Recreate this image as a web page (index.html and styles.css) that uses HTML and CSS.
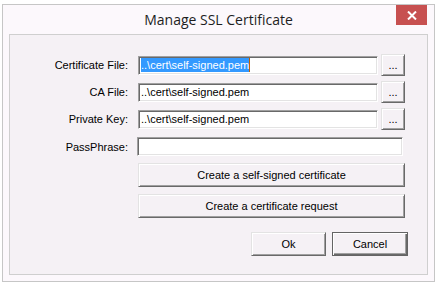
FILE: index.html
```html
<!DOCTYPE html>
<html lang="en">
<head>
  <meta charset="UTF-8">
  <title>Manage SSL Certificate</title>
  <link rel="stylesheet" href="styles.css">
</head>
<body>
  <div class="window">
    <div class="titlebar">
      <div></div>
      <div class="title">Manage SSL Certificate</div>
      <button class="close" title="Close">
        <svg width="10" height="9" viewBox="0 0 10 9">
          <path d="M1 0.5 L9 8.5 M9 0.5 L1 8.5" stroke="#fff" stroke-width="2"/>
        </svg>
      </button>
    </div>

    <div class="panel">
      <div class="form">
        <label class="label">Certificate File:</label>
        <div class="field"><span class="sel">..\cert\self-signed.pem</span></div>
        <button class="btn browse">...</button>

        <label class="label">CA File:</label>
        <div class="field">..\cert\self-signed.pem</div>
        <button class="btn browse">...</button>

        <label class="label">Private Key:</label>
        <div class="field">..\cert\self-signed.pem</div>
        <button class="btn browse">...</button>

        <label class="label pass-label">PassPhrase:</label>
        <div class="field pass"></div>

        <button class="btn wide first">Create a self-signed certificate</button>
        <button class="btn wide">Create a certificate request</button>
      </div>

      <div class="actions">
        <button class="btn action">Ok</button>
        <button class="btn action default">Cancel</button>
      </div>
    </div>
  </div>
</body>
</html>
```

FILE: styles.css
```css
body {
  margin: 0;
  background: #ffffff;
  font-family: "Liberation Sans", Arial, sans-serif;
  font-size: 11px;
  color: #000;
}

.window {
  margin: 4px 0 0 2px;
  width: 431px;
  height: 276px;
  border: 1px solid #c6c6c6;
  background: #fcf8fc;
}

.titlebar {
  display: grid;
  grid-template-columns: 1fr auto 1fr;
  align-items: start;
  height: 29px;
}
.title {
  font-family: "Open Sans", "Noto Sans", sans-serif;
  font-size: 14px;
  color: #1e1e1e;
  padding-top: 5px;
}
.close {
  justify-self: end;
  margin-right: 7px;
  width: 31px;
  height: 20px;
  border: 0;
  padding: 0;
  background: #c75050;
  display: flex;
  align-items: center;
  justify-content: center;
}

.panel {
  margin: 0 6px 0 6px;
  height: 239px;
  border: 1px solid #cfcfcf;
  background: #f5f1f5;
  box-sizing: content-box;
}

.form {
  display: grid;
  grid-template-columns: 125px 240px 24px;
  column-gap: 3px;
  row-gap: 5px;
  align-items: center;
  padding-top: 19px;
}
.label {
  text-align: right;
  padding-right: 7px;
}

.field {
  height: 17px;
  line-height: 17px;
  padding-left: 2px;
  background: #fff;
  border-top: 1px solid #a0a0a0;
  border-left: 1px solid #a0a0a0;
  border-bottom: 1px solid #fff;
  border-right: 1px solid #fff;
  box-shadow: inset 1px 1px #696969, inset -1px -1px #e3e3e3;
  white-space: nowrap;
  overflow: hidden;
}
.sel {
  background: #3399ff;
  color: #fff;
  border-right: 1px solid #c06000;
  padding: 1px 0;
}

.btn {
  font-family: "Liberation Sans", Arial, sans-serif;
  font-size: 11px;
  color: #000;
  background: #f5f1f5;
  padding: 0;
  border-top: 1px solid #e3e3e3;
  border-left: 1px solid #e3e3e3;
  border-bottom: 1px solid #696969;
  border-right: 1px solid #696969;
  box-shadow: inset 1px 1px #fff, inset -1px -1px #a0a0a0;
}
.browse {
  height: 22px;
  line-height: 16px;
}

.pass-label {
  margin-top: 2px;
}
.pass {
  grid-column: 2 / 4;
  margin-top: 2px;
  margin-left: -1px;
  margin-right: 2px;
}

.wide {
  grid-column: 2 / 4;
  height: 24px;
}
.wide.first {
  margin-top: 2px;
}
.form .wide + .wide {
  margin-top: 2px;
}

.actions {
  display: flex;
  justify-content: flex-end;
  gap: 6px;
  padding: 14px 19px 0 0;
}
.action {
  width: 75px;
  height: 24px;
}
.default {
  width: 76px;
  border: 1px solid #646464;
  box-shadow: inset 1px 1px #fff, inset -1px -1px #696969, inset -2px -2px #a0a0a0;
}
```
